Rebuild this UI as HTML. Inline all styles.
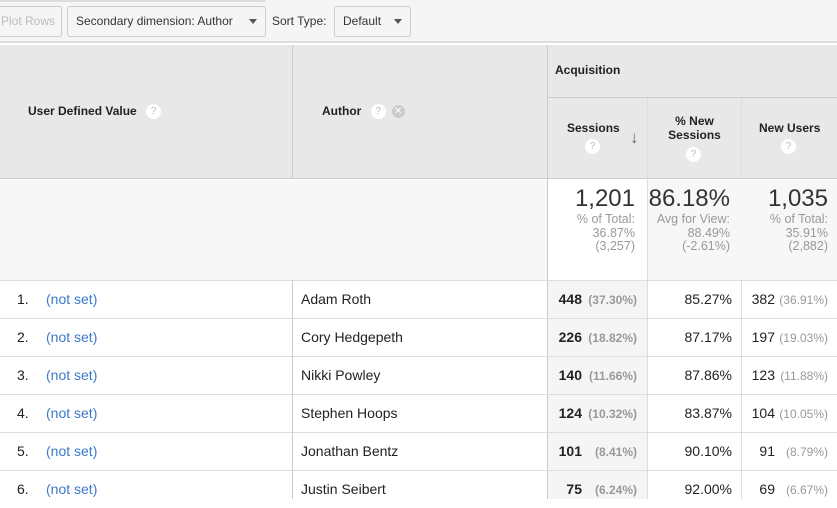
<!DOCTYPE html>
<html><head><meta charset="utf-8">
<style>
*{box-sizing:border-box;margin:0;padding:0}
body{width:837px;height:499px;overflow:hidden;background:#fff;font-family:"Liberation Sans",Arial,sans-serif;color:#222;position:relative}
.a{position:absolute}
.btn{position:absolute;top:6px;height:31px;border:1px solid #ccc;border-radius:3px;background:#f5f5f5;font-size:12px;color:#333;line-height:29px;padding-left:8px}
.tri{position:absolute;top:13px;width:0;height:0;border-left:4px solid transparent;border-right:4px solid transparent;border-top:5px solid #555}
.q{display:inline-block;width:15px;height:15px;border-radius:50%;background:#fff;color:#bbb;font-size:10px;line-height:15px;text-align:center;font-weight:normal;vertical-align:middle}
.h{font-weight:bold;font-size:12px;color:#222}
.vl{position:absolute;width:1px;background:#ccc}
.hl{position:absolute;height:1px;background:#ddd;left:0;width:837px}
.row{position:absolute;left:0;width:837px;height:38px;font-size:14px}
.row span{position:absolute;top:11px}
.g{color:#999;font-size:12px;font-weight:bold}
.tot{position:absolute;top:185px;text-align:right;color:#999;font-size:12.5px;line-height:13.5px}
.tot b{display:block;font-weight:normal;color:#333;font-size:24px;line-height:28px}
</style></head><body>
<div class="a" style="left:0;top:0;width:837px;height:43px;background:#f5f5f5;border-bottom:2px solid #ddd"></div>
<div class="a" style="left:0;top:0;width:265px;height:2px;background:#ddd"></div>
<div class="btn" style="left:-10px;width:72px;color:#bbb;padding-left:10px">Plot Rows</div>
<div class="btn" style="left:67px;width:199px">Secondary dimension: Author</div><div class="tri" style="left:249px;top:19px"></div>
<div class="a" style="left:272px;top:14px;font-size:12px;color:#333">Sort Type:</div>
<div class="btn" style="left:334px;width:77px">Default</div><div class="tri" style="left:394px;top:19px"></div>

<div class="a" style="left:0;top:45px;width:837px;height:134px;background:#e8e8e8;border-bottom:1px solid #ccc"></div>
<div class="a" style="left:547px;top:97px;width:290px;height:1px;background:#ccc"></div>
<div class="vl" style="left:292px;top:45px;height:134px"></div>
<div class="vl" style="left:547px;top:45px;height:454px"></div>
<div class="vl" style="left:647px;top:98px;height:401px;background:#ddd"></div>
<div class="vl" style="left:741px;top:98px;height:401px;background:#ddd"></div>
<div class="a h" style="left:28px;top:104px">User Defined Value <span class="q" style="margin-left:6px">?</span></div>
<div class="a h" style="left:322px;top:104px">Author <span class="q" style="margin-left:6px">?</span><span class="q" style="margin-left:6px;width:13px;height:13px;line-height:13px;background:#ccc;color:#fff;font-size:10px">✕</span></div>
<div class="a h" style="left:555px;top:63px">Acquisition</div>
<div class="a h" style="left:567px;top:121px">Sessions</div><span class="q a" style="left:585px;top:139px">?</span>
<div class="a" style="left:630px;top:128px;color:#666;font-size:17px;font-weight:bold">↓</div>
<div class="a h" style="left:648px;top:114px;width:93px;text-align:center;line-height:14px">% New<br>Sessions</div><span class="q a" style="left:686px;top:147px">?</span>
<div class="a h" style="left:759px;top:121px">New Users</div><span class="q a" style="left:781px;top:139px">?</span>

<div class="a" style="left:0;top:180px;width:547px;height:100px;background:#f7f7f7"></div>
<div class="a" style="left:648px;top:180px;width:189px;height:100px;background:#f7f7f7"></div>
<div class="a" style="left:548px;top:280px;width:99px;height:219px;background:#f5f5f5"></div>
<div class="tot" style="right:202px"><b>1,201</b>% of Total:<br>36.87%<br>(3,257)</div>
<div class="tot" style="right:107px"><b>86.18%</b>Avg for View:<br>88.49%<br>(-2.61%)</div>
<div class="tot" style="right:9px"><b>1,035</b>% of Total:<br>35.91%<br>(2,882)</div>
<div class="hl" style="top:280px"></div>
<div class="hl" style="top:318px"></div>
<div class="hl" style="top:356px"></div>
<div class="hl" style="top:394px"></div>
<div class="hl" style="top:432px"></div>
<div class="hl" style="top:470px"></div>
<div class="vl" style="left:292px;top:280px;height:219px"></div>

<div class="row" style="top:280px"><span style="left:17px">1.</span><span style="left:46px;color:#3a7bc8">(not set)</span><span style="left:301px">Adam Roth</span><span style="right:255px;font-weight:bold">448</span><span class="g" style="right:200px;top:13px">(37.30%)</span><span style="right:105px">85.27%</span><span style="right:62px">382</span><span class="g" style="right:9px;top:13px;font-weight:normal">(36.91%)</span></div>
<div class="row" style="top:318px"><span style="left:17px">2.</span><span style="left:46px;color:#3a7bc8">(not set)</span><span style="left:301px">Cory Hedgepeth</span><span style="right:255px;font-weight:bold">226</span><span class="g" style="right:200px;top:13px">(18.82%)</span><span style="right:105px">87.17%</span><span style="right:62px">197</span><span class="g" style="right:9px;top:13px;font-weight:normal">(19.03%)</span></div>
<div class="row" style="top:356px"><span style="left:17px">3.</span><span style="left:46px;color:#3a7bc8">(not set)</span><span style="left:301px">Nikki Powley</span><span style="right:255px;font-weight:bold">140</span><span class="g" style="right:200px;top:13px">(11.66%)</span><span style="right:105px">87.86%</span><span style="right:62px">123</span><span class="g" style="right:9px;top:13px;font-weight:normal">(11.88%)</span></div>
<div class="row" style="top:394px"><span style="left:17px">4.</span><span style="left:46px;color:#3a7bc8">(not set)</span><span style="left:301px">Stephen Hoops</span><span style="right:255px;font-weight:bold">124</span><span class="g" style="right:200px;top:13px">(10.32%)</span><span style="right:105px">83.87%</span><span style="right:62px">104</span><span class="g" style="right:9px;top:13px;font-weight:normal">(10.05%)</span></div>
<div class="row" style="top:432px"><span style="left:17px">5.</span><span style="left:46px;color:#3a7bc8">(not set)</span><span style="left:301px">Jonathan Bentz</span><span style="right:255px;font-weight:bold">101</span><span class="g" style="right:200px;top:13px">(8.41%)</span><span style="right:105px">90.10%</span><span style="right:62px">91</span><span class="g" style="right:9px;top:13px;font-weight:normal">(8.79%)</span></div>
<div class="row" style="top:470px"><span style="left:17px">6.</span><span style="left:46px;color:#3a7bc8">(not set)</span><span style="left:301px">Justin Seibert</span><span style="right:255px;font-weight:bold">75</span><span class="g" style="right:200px;top:13px">(6.24%)</span><span style="right:105px">92.00%</span><span style="right:62px">69</span><span class="g" style="right:9px;top:13px;font-weight:normal">(6.67%)</span></div>
</body></html>
